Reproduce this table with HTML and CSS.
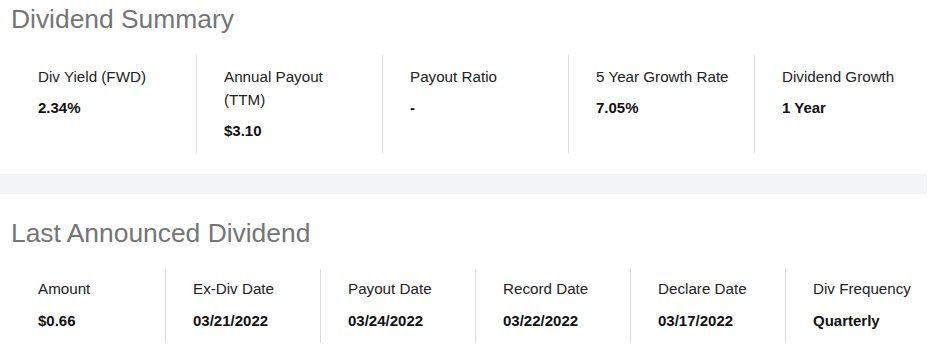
FILE: index.html
```html
<!DOCTYPE html>
<html>
<head>
<meta charset="utf-8">
<link rel="stylesheet" href="styles.css">
</head>
<body>
<div class="page">
  <section class="section summary">
    <h2 class="title">Dividend Summary</h2>
    <div class="grid grid-5">
      <div class="cell"><div class="label">Div Yield (FWD)</div><div class="value">2.34%</div></div>
      <div class="cell"><div class="label">Annual Payout<br>(TTM)</div><div class="value">$3.10</div></div>
      <div class="cell"><div class="label">Payout Ratio</div><div class="value">-</div></div>
      <div class="cell"><div class="label">5 Year Growth Rate</div><div class="value">7.05%</div></div>
      <div class="cell"><div class="label">Dividend Growth</div><div class="value">1 Year</div></div>
    </div>
  </section>
  <div class="band"></div>
  <section class="section announced">
    <h2 class="title">Last Announced Dividend</h2>
    <div class="grid grid-6">
      <div class="cell"><div class="label">Amount</div><div class="value">$0.66</div></div>
      <div class="cell"><div class="label">Ex-Div Date</div><div class="value">03/21/2022</div></div>
      <div class="cell"><div class="label">Payout Date</div><div class="value">03/24/2022</div></div>
      <div class="cell"><div class="label">Record Date</div><div class="value">03/22/2022</div></div>
      <div class="cell"><div class="label">Declare Date</div><div class="value">03/17/2022</div></div>
      <div class="cell"><div class="label">Div Frequency</div><div class="value">Quarterly</div></div>
    </div>
  </section>
</div>
</body>
</html>
```
FILE: styles.css
```css
html, body {
  margin: 0;
  padding: 0;
  background: #fff;
  overflow: hidden;
}
body {
  font-family: "Liberation Sans", Arial, sans-serif;
  color: #222;
}
.page {
  width: 927px;
}
.section {
  padding: 4px 0 21px 10px;
}
.announced {
  padding-top: 24px;
  padding-bottom: 0;
}
.title {
  margin: 0 0 21px 1px;
  font-size: 26.4px;
  line-height: 30px;
  font-weight: normal;
  color: #757575;
}
.grid {
  display: grid;
}
.grid-5 {
  grid-template-columns: repeat(4, 186px) 1fr;
}
.grid-6 {
  grid-template-columns: repeat(5, 155px) 1fr;
}
.cell {
  padding: 10px 0 11px 28px;
}
.cell + .cell {
  border-left: 1px solid #dcdcdc;
  padding-left: 27px;
}
.announced .cell {
  padding-top: 8px;
}
.label {
  font-size: 15.2px;
  line-height: 23px;
  color: #222;
}
.value {
  margin-top: 8px;
  font-size: 15px;
  line-height: 23px;
  font-weight: bold;
  color: #111;
}
.announced .value {
  margin-top: 9px;
}
.band {
  height: 20px;
  background: #f3f4f7;
}
```
